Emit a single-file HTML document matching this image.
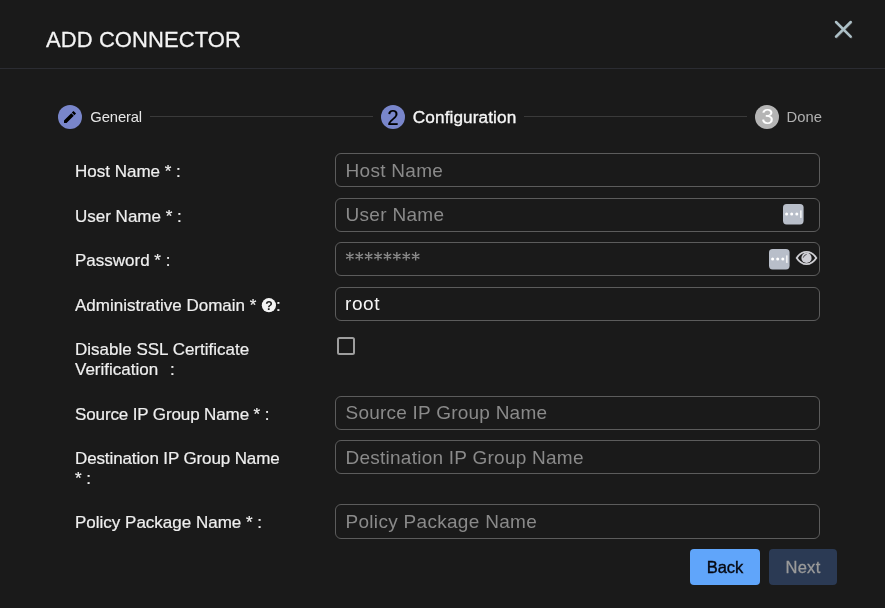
<!DOCTYPE html>
<html>
<head>
<meta charset="utf-8">
<style>
*{box-sizing:border-box;margin:0;padding:0}
html,body{width:885px;height:608px;overflow:hidden;background:#1a1a1a;font-family:"Liberation Sans",sans-serif;color:#ececec}
.abs{position:absolute;white-space:pre;line-height:1}
#wrap{position:absolute;left:0;top:0;width:885px;height:608px;will-change:transform}
#title{left:46px;top:30px;font-size:22px;color:#f4f4f4;letter-spacing:0.08px;transform:translateY(-0.6px) scaleY(1.03);transform-origin:0 18px;-webkit-text-stroke:0.25px #f4f4f4}
#hr{position:absolute;left:0;top:68px;width:885px;height:1px;background:#2b2c32}
.circ{position:absolute;width:24px;height:24px;border-radius:50%;top:105px;background:#7986cb}
.line{position:absolute;height:1px;top:116px;background:#3a3a3a}
.lbl{font-size:17px;color:#efefef;-webkit-text-stroke:0.2px #efefef}
.inp{position:absolute;left:335px;width:485px;height:34px;border:1px solid #5c5c5c;border-radius:6px;background:#1a1a1a}
.ph{font-size:19px;letter-spacing:0.3px;color:#8a8a8a}
.btn{position:absolute;top:549px;height:36px;border-radius:4px}
</style>
</head>
<body>
<div id="wrap">
<div id="title" class="abs">ADD CONNECTOR</div>
<svg class="abs" style="left:833px;top:19px" width="21" height="21" viewBox="0 0 21 21"><path d="M3.7 3.8 L18.3 18.4 M18.3 3.8 L3.7 18.4" stroke="#4a4a4a" stroke-width="2.3" stroke-linecap="round" fill="none"/><path d="M3.0 3.0 L17.7 17.7 M17.7 3.0 L3.0 17.7" stroke="#adc0c7" stroke-width="2.5" stroke-linecap="round" fill="none"/></svg>
<div id="hr"></div>

<!-- steps -->
<div class="circ" style="left:58px"></div>
<svg class="abs" style="left:58px;top:105px" width="24" height="24" viewBox="0 0 24 24"><path d="M15.50 5.90 L18.05 8.45 L16.35 10.14 L13.80 7.60 Z M13.27 8.13 L15.82 10.67 L8.55 17.95 L6.00 17.95 L6.00 15.40 Z" fill="#000"/></svg>
<div class="abs" style="left:90.3px;top:110px;font-size:14.8px;letter-spacing:-0.13px;color:#e6e6e6">General</div>
<div class="line" style="left:150px;width:223px"></div>
<div class="circ" style="left:381px"></div>
<div class="abs" style="left:381.3px;top:107px;width:24px;text-align:center;font-size:22px;color:#000;transform:scaleX(0.93);-webkit-text-stroke:0.2px #000">2</div>
<div class="abs" style="left:412.8px;top:109px;font-size:17.2px;letter-spacing:0.1px;color:#f6f6f6;-webkit-text-stroke:0.35px #f6f6f6">Configuration</div>
<div class="line" style="left:524px;width:223px"></div>
<div class="circ" style="left:755px;background:#b5b5b5"></div>
<div class="abs" style="left:755.4px;top:106px;width:24px;text-align:center;font-size:22.5px;color:#fff">3</div>
<div class="abs" style="left:786.5px;top:110px;font-size:14.8px;letter-spacing:0px;color:#b0b0b0">Done</div>

<!-- labels -->
<div class="abs lbl" style="left:75px;top:163px">Host Name * :</div>
<div class="abs lbl" style="left:75px;top:208px">User Name * :</div>
<div class="abs lbl" style="left:75px;top:252px">Password * :</div>
<div class="abs lbl" style="left:75px;top:297px">Administrative Domain * </div>
<div class="abs lbl" style="left:276px;top:297px">:</div>
<svg class="abs" style="left:261px;top:297px" width="16" height="16" viewBox="0 0 16 16"><circle cx="7.9" cy="8.2" r="7.1" fill="#f4f4f4"/><text x="7.9" y="12.6" text-anchor="middle" font-family="Liberation Sans" font-weight="bold" font-size="12.3" fill="#1b1b1b">?</text></svg>
<div class="abs lbl" style="left:75px;top:341px">Disable SSL Certificate</div>
<div class="abs lbl" style="left:75px;top:361px">Verification</div><div class="abs lbl" style="left:170px;top:361px">:</div>
<div class="abs lbl" style="left:75px;top:406px;letter-spacing:-0.12px">Source IP Group Name * :</div>
<div class="abs lbl" style="left:75px;top:450px;letter-spacing:-0.12px">Destination IP Group Name</div>
<div class="abs lbl" style="left:75px;top:470px">* :</div>
<div class="abs lbl" style="left:75px;top:514px">Policy Package Name * :</div>

<!-- inputs -->
<div class="inp" style="top:153px"></div>
<div class="inp" style="top:198px"></div>
<div class="inp" style="top:242px"></div>
<div class="inp" style="top:287px"></div>
<div class="inp" style="top:396px"></div>
<div class="inp" style="top:440px"></div>
<div class="inp" style="top:504px;height:35px"></div>
<div class="abs ph" style="left:345.5px;top:161px">Host Name</div>
<div class="abs ph" style="left:345.5px;top:205px">User Name</div>
<svg class="abs" style="left:340px;top:245px" width="90" height="24" viewBox="0 0 90 24"><path d="M9.85 6.95 L9.85 15.55 M6.13 9.10 L13.57 13.40 M6.13 13.40 L13.57 9.10 M19.25 6.95 L19.25 15.55 M15.53 9.10 L22.97 13.40 M15.53 13.40 L22.97 9.10 M28.65 6.95 L28.65 15.55 M24.93 9.10 L32.37 13.40 M24.93 13.40 L32.37 9.10 M38.05 6.95 L38.05 15.55 M34.33 9.10 L41.77 13.40 M34.33 13.40 L41.77 9.10 M47.45 6.95 L47.45 15.55 M43.73 9.10 L51.17 13.40 M43.73 13.40 L51.17 9.10 M56.85 6.95 L56.85 15.55 M53.13 9.10 L60.57 13.40 M53.13 13.40 L60.57 9.10 M66.25 6.95 L66.25 15.55 M62.53 9.10 L69.97 13.40 M62.53 13.40 L69.97 9.10 M75.65 6.95 L75.65 15.55 M71.93 9.10 L79.37 13.40 M71.93 13.40 L79.37 9.10" stroke="#8a8a8a" stroke-width="1.35" fill="none"/></svg>
<div class="abs ph" style="left:345px;top:294px;letter-spacing:0.6px;color:#f4f4f4">root</div>
<div class="abs ph" style="left:345.5px;top:403px;letter-spacing:0.23px">Source IP Group Name</div>
<div class="abs ph" style="left:345.5px;top:448px;letter-spacing:0.25px">Destination IP Group Name</div>
<div class="abs ph" style="left:345.5px;top:512px">Policy Package Name</div>

<!-- checkbox -->
<div style="position:absolute;left:337px;top:337px;width:18px;height:18px;border:2px solid #9e9e9e;border-radius:2.5px"></div>

<!-- pw manager icons -->
<svg class="abs" style="left:783.2px;top:204.3px" width="21" height="21" viewBox="0 0 21 21"><rect x="0" y="0" width="20.6" height="20.4" rx="3.6" fill="#b8bec9"/><circle cx="3.6" cy="10.05" r="1.5" fill="#fff"/><circle cx="8.7" cy="10.05" r="1.5" fill="#fff"/><circle cx="13.8" cy="10.05" r="1.5" fill="#fff"/><rect x="17.25" y="6.4" width="1.25" height="7.5" fill="#fff"/></svg>
<svg class="abs" style="left:769.4px;top:248.5px" width="21" height="21" viewBox="0 0 21 21"><rect x="0" y="0" width="20.6" height="20.4" rx="3.6" fill="#b8bec9"/><circle cx="3.6" cy="10.05" r="1.5" fill="#fff"/><circle cx="8.7" cy="10.05" r="1.5" fill="#fff"/><circle cx="13.8" cy="10.05" r="1.5" fill="#fff"/><rect x="17.25" y="6.4" width="1.25" height="7.5" fill="#fff"/></svg>
<svg class="abs" style="left:795px;top:250px" width="23" height="17" viewBox="0 0 23 17"><path d="M1.7 8.0 C5 2.9 8.5 1.8 11.5 1.8 C14.5 1.8 18 2.9 21.3 8.0 C18 13.1 14.5 14.2 11.5 14.2 C8.5 14.2 5 13.1 1.7 8.0 Z" fill="none" stroke="#cfcfd3" stroke-width="1.8"/><circle cx="11.5" cy="7.9" r="5.1" fill="#cfcfd5"/><path d="M8.4 7.2 A3.5 3.5 0 0 1 11.2 4.5" fill="none" stroke="#3c3c40" stroke-width="0.9" stroke-linecap="round"/></svg>

<!-- buttons -->
<div class="btn" style="left:690px;width:70px;background:#60a5fa"></div>
<div class="abs" style="left:690px;top:559px;width:70px;text-align:center;font-size:16.5px;color:#05070f;-webkit-text-stroke:0.35px #05070f">Back</div>
<div class="btn" style="left:769px;width:68px;background:#2b3a54"></div>
<div class="abs" style="left:769px;top:559px;width:68px;text-align:center;font-size:16.5px;letter-spacing:0.3px;color:#9a9a9a;-webkit-text-stroke:0.3px #9a9a9a">Next</div>
</div>
</body>
</html>
